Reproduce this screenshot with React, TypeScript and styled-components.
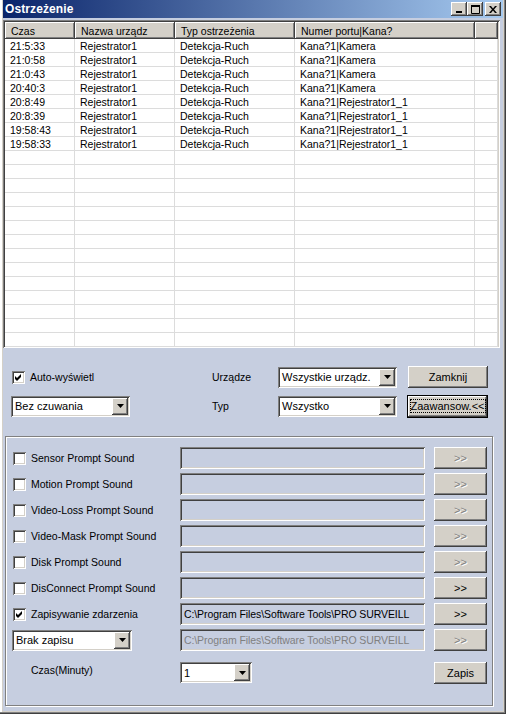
import React from 'react';
import styled, { createGlobalStyle, css } from 'styled-components';

const FACE = '#d4d0c8';
const PANEL = '#c6cee0';
const GRID = '#dcdcdc';

const GlobalStyle = createGlobalStyle`
  html, body {
    margin: 0;
    padding: 0;
    background: ${FACE};
  }
  body {
    font-family: "Liberation Sans", Arial, sans-serif;
    font-size: 10.5px;
    color: #000;
  }
  * {
    box-sizing: border-box;
  }
`;

const raised = css`
  background: ${FACE};
  box-shadow: inset -1px -1px 0 #404040, inset 1px 1px 0 #fff,
    inset -2px -2px 0 #808080, inset 2px 2px 0 ${FACE};
`;

const sunken = css`
  box-shadow: inset 1px 1px 0 #808080, inset -1px -1px 0 #fff,
    inset 2px 2px 0 #404040, inset -2px -2px 0 ${FACE};
`;

const Window = styled.div`
  width: 506px;
  height: 714px;
  padding: 0 3px 3px 3px;
  background: ${FACE};
  display: flex;
  flex-direction: column;
  box-shadow: inset -1px -1px 0 #404040, inset -2px -2px 0 #808080,
    inset 2px 0 0 #fff;
`;

const TitleBar = styled.div`
  height: 18px;
  flex: none;
  display: flex;
  align-items: center;
  padding: 0 2px 0 2px;
  background: linear-gradient(to right, #0a246a, #a6caf0);
`;

const Title = styled.span`
  flex: 1;
  color: #fff;
  font-weight: bold;
  font-size: 12px;
  letter-spacing: 0.1px;
`;

const CaptionButton = styled.div<{ $gap?: boolean }>`
  width: 16px;
  height: 14px;
  margin-left: ${(p) => (p.$gap ? '2px' : '0')};
  ${raised};
  display: flex;
  align-items: center;
  justify-content: center;

  svg {
    display: block;
  }
`;

const Body = styled.div`
  flex: 1;
  background: ${PANEL};
  display: flex;
  flex-direction: column;
`;

const ListView = styled.div`
  width: 497px;
  height: 328px;
  margin-top: 2px;
  padding: 2px;
  background: #fff;
  ${sunken};
  overflow: hidden;
`;

const columns = '70px 100px 120px 180px 1fr';

const HeaderRow = styled.div`
  display: grid;
  grid-template-columns: ${columns};
  height: 17px;
`;

const HeaderCell = styled.div`
  ${raised};
  box-shadow: inset -1px -1px 0 #404040, inset 1px 1px 0 #fff,
    inset -2px -2px 0 #808080;
  padding: 1px 6px 0;
  line-height: 16px;
  white-space: nowrap;
  overflow: hidden;
`;

const DataRow = styled.div`
  display: grid;
  grid-template-columns: ${columns};
  height: 14px;
  border-bottom: 1px solid ${GRID};
`;

const DataCell = styled.div`
  padding: 1px 5px 0;
  line-height: 12px;
  white-space: nowrap;
  overflow: hidden;
  border-right: 1px solid ${GRID};
`;

const Controls = styled.div`
  margin: 18px 0 0 8px;
  display: grid;
  grid-template-columns: 201px 66px 130px 80px;
  grid-template-rows: 22px 22px;
  row-gap: 7px;
  align-items: center;
`;

const CheckRow = styled.label`
  display: flex;
  align-items: center;
  gap: 5px;
  padding-left: 1px;
  white-space: nowrap;
`;

const CheckBox = styled.div`
  width: 13px;
  height: 13px;
  flex: none;
  background: #fff;
  ${sunken};
  display: flex;
  align-items: center;
  justify-content: center;

  svg {
    display: block;
  }
`;

const Label = styled.span<{ $indent?: number; $raise?: number }>`
  padding-left: ${(p) => p.$indent ?? 0}px;
  padding-bottom: ${(p) => p.$raise ?? 0}px;
  white-space: nowrap;
`;

const ComboBox = styled.div<{ $width: number }>`
  width: ${(p) => p.$width}px;
  height: 21px;
  padding: 2px;
  background: #fff;
  ${sunken};
  display: flex;
  align-items: center;
`;

const ComboText = styled.span`
  flex: 1;
  padding-left: 2px;
  white-space: nowrap;
  overflow: hidden;
  font-size: 11px;
`;

const ComboArrow = styled.div`
  width: 16px;
  height: 17px;
  flex: none;
  ${raised};
  display: flex;
  align-items: center;
  justify-content: center;

  svg {
    display: block;
  }
`;

const PushButton = styled.div<{ $default?: boolean; $disabled?: boolean }>`
  height: ${(p) => (p.$default ? '23px' : '22px')};
  ${raised};
  display: flex;
  align-items: center;
  justify-content: center;
  white-space: nowrap;
  font-size: 11px;
  color: ${(p) => (p.$disabled ? '#808080' : '#000')};
  text-shadow: ${(p) => (p.$disabled ? '1px 1px 0 #fff' : 'none')};
  ${(p) =>
    p.$default &&
    css`
      margin-left: -1px;
      box-shadow: inset 0 0 0 1px #000, inset -2px -2px 0 #404040,
        inset 2px 2px 0 #fff, inset -3px -3px 0 #808080;
    `}
`;

const FocusRing = styled.span`
  padding: 1px 1px;
  outline: 1px dotted #000;
  outline-offset: -1px;
`;

const GroupBox = styled.div`
  margin: 19px 0 0 2px;
  width: 488px;
  height: 270px;
  border: 1px solid #808080;
  box-shadow: 1px 1px 0 #fff, inset 1px 1px 0 #fff;
  padding: 10px 0 0 6px;
`;

const rowColumns = '168px 254px 53px';

const SoundGrid = styled.div`
  display: grid;
  grid-template-columns: ${rowColumns};
  grid-auto-rows: 22px;
  row-gap: 4px;
  align-items: center;
`;

const PathField = styled.div<{ $disabled?: boolean }>`
  height: 22px;
  margin-right: 9px;
  padding: 0 3px 0 4px;
  ${sunken};
  display: flex;
  align-items: center;
  white-space: nowrap;
  overflow: hidden;
  font-size: 10.5px;
  letter-spacing: -0.1px;
  color: ${(p) => (p.$disabled ? '#808080' : '#000')};
`;

const FooterRow = styled.div`
  margin-top: 10px;
  display: grid;
  grid-template-columns: ${rowColumns};
  height: 23px;
  align-items: center;
`;

const Check = () => (
  <svg width="9" height="9" viewBox="0 0 9 9">
    <polygon points="1,3 3,5 7,1 7,4 3,8 1,6" fill="#000" />
  </svg>
);

const Arrow = () => (
  <svg width="7" height="4" viewBox="0 0 7 4">
    <polygon points="0,0 7,0 3.5,4" fill="#000" />
  </svg>
);

const Combo: React.FC<{ width: number; value: string }> = ({ width, value }) => (
  <ComboBox $width={width}>
    <ComboText>{value}</ComboText>
    <ComboArrow>
      <Arrow />
    </ComboArrow>
  </ComboBox>
);

const Option: React.FC<{ checked?: boolean; label: string }> = ({ checked, label }) => (
  <CheckRow>
    <CheckBox>{checked && <Check />}</CheckBox>
    <span>{label}</span>
  </CheckRow>
);

const events = [
  ['21:5:33', 'Kana?1|Kamera'],
  ['21:0:58', 'Kana?1|Kamera'],
  ['21:0:43', 'Kana?1|Kamera'],
  ['20:40:3', 'Kana?1|Kamera'],
  ['20:8:49', 'Kana?1|Rejestrator1_1'],
  ['20:8:39', 'Kana?1|Rejestrator1_1'],
  ['19:58:43', 'Kana?1|Rejestrator1_1'],
  ['19:58:33', 'Kana?1|Rejestrator1_1'],
];

const PATH = 'C:\\Program Files\\Software Tools\\PRO SURVEILL';

const sounds: { label: string; checked?: boolean; enabled?: boolean; path?: string }[] = [
  { label: 'Sensor Prompt Sound' },
  { label: 'Motion Prompt Sound' },
  { label: 'Video-Loss Prompt Sound' },
  { label: 'Video-Mask Prompt Sound' },
  { label: 'Disk Prompt Sound' },
  { label: 'DisConnect Prompt Sound', enabled: true },
  { label: 'Zapisywanie zdarzenia', checked: true, enabled: true, path: PATH },
];

export default function App() {
  const emptyRows = 22 - events.length;

  return (
    <>
      <GlobalStyle />
      <Window>
        <TitleBar>
          <Title>Ostrzeżenie</Title>
          <CaptionButton>
            <svg width="8" height="7" viewBox="0 0 8 7">
              <rect x="1" y="5" width="6" height="2" fill="#000" />
            </svg>
          </CaptionButton>
          <CaptionButton>
            <svg width="9" height="9" viewBox="0 0 9 9">
              <path d="M0.5 1.5h8v7h-8z" fill="none" stroke="#000" />
              <rect x="0" y="0" width="9" height="2" fill="#000" />
            </svg>
          </CaptionButton>
          <CaptionButton $gap>
            <svg width="8" height="7" viewBox="0 0 8 7">
              <path d="M0 0h2l2 2.5 2-2.5h2l-3 3.5 3 3.5h-2l-2-2.5-2 2.5h-2l3-3.5z" fill="#000" />
            </svg>
          </CaptionButton>
        </TitleBar>

        <Body>
          <ListView>
            <HeaderRow>
              <HeaderCell>Czas</HeaderCell>
              <HeaderCell>Nazwa urządz</HeaderCell>
              <HeaderCell>Typ ostrzeżenia</HeaderCell>
              <HeaderCell>Numer portu|Kana?</HeaderCell>
              <HeaderCell />
            </HeaderRow>
            {events.map(([time, port], i) => (
              <DataRow key={i}>
                <DataCell>{time}</DataCell>
                <DataCell>Rejestrator1</DataCell>
                <DataCell>Detekcja-Ruch</DataCell>
                <DataCell>{port}</DataCell>
                <DataCell />
              </DataRow>
            ))}
            {Array.from({ length: emptyRows }).map((_, i) => (
              <DataRow key={`e${i}`}>
                <DataCell />
                <DataCell />
                <DataCell />
                <DataCell />
                <DataCell />
              </DataRow>
            ))}
          </ListView>

          <Controls>
            <Option checked label="Auto-wyświetl" />
            <Label>Urządze</Label>
            <Combo width={119} value="Wszystkie urządz." />
            <PushButton>Zamknij</PushButton>

            <Combo width={119} value="Bez czuwania" />
            <Label>Typ</Label>
            <Combo width={119} value="Wszystko" />
            <PushButton $default>
              <FocusRing>Zaawansow.&lt;&lt;</FocusRing>
            </PushButton>
          </Controls>

          <GroupBox>
            <SoundGrid>
              {sounds.map((s) => (
                <React.Fragment key={s.label}>
                  <Option checked={s.checked} label={s.label} />
                  <PathField>{s.path}</PathField>
                  <PushButton $disabled={!s.enabled}>&gt;&gt;</PushButton>
                </React.Fragment>
              ))}
              <Combo width={120} value="Brak zapisu" />
              <PathField $disabled>{PATH}</PathField>
              <PushButton $disabled>&gt;&gt;</PushButton>
            </SoundGrid>

            <FooterRow>
              <Label $indent={19} $raise={5}>
                Czas(Minuty)
              </Label>
              <Combo width={72} value="1" />
              <PushButton>Zapis</PushButton>
            </FooterRow>
          </GroupBox>
        </Body>
      </Window>
    </>
  );
}
